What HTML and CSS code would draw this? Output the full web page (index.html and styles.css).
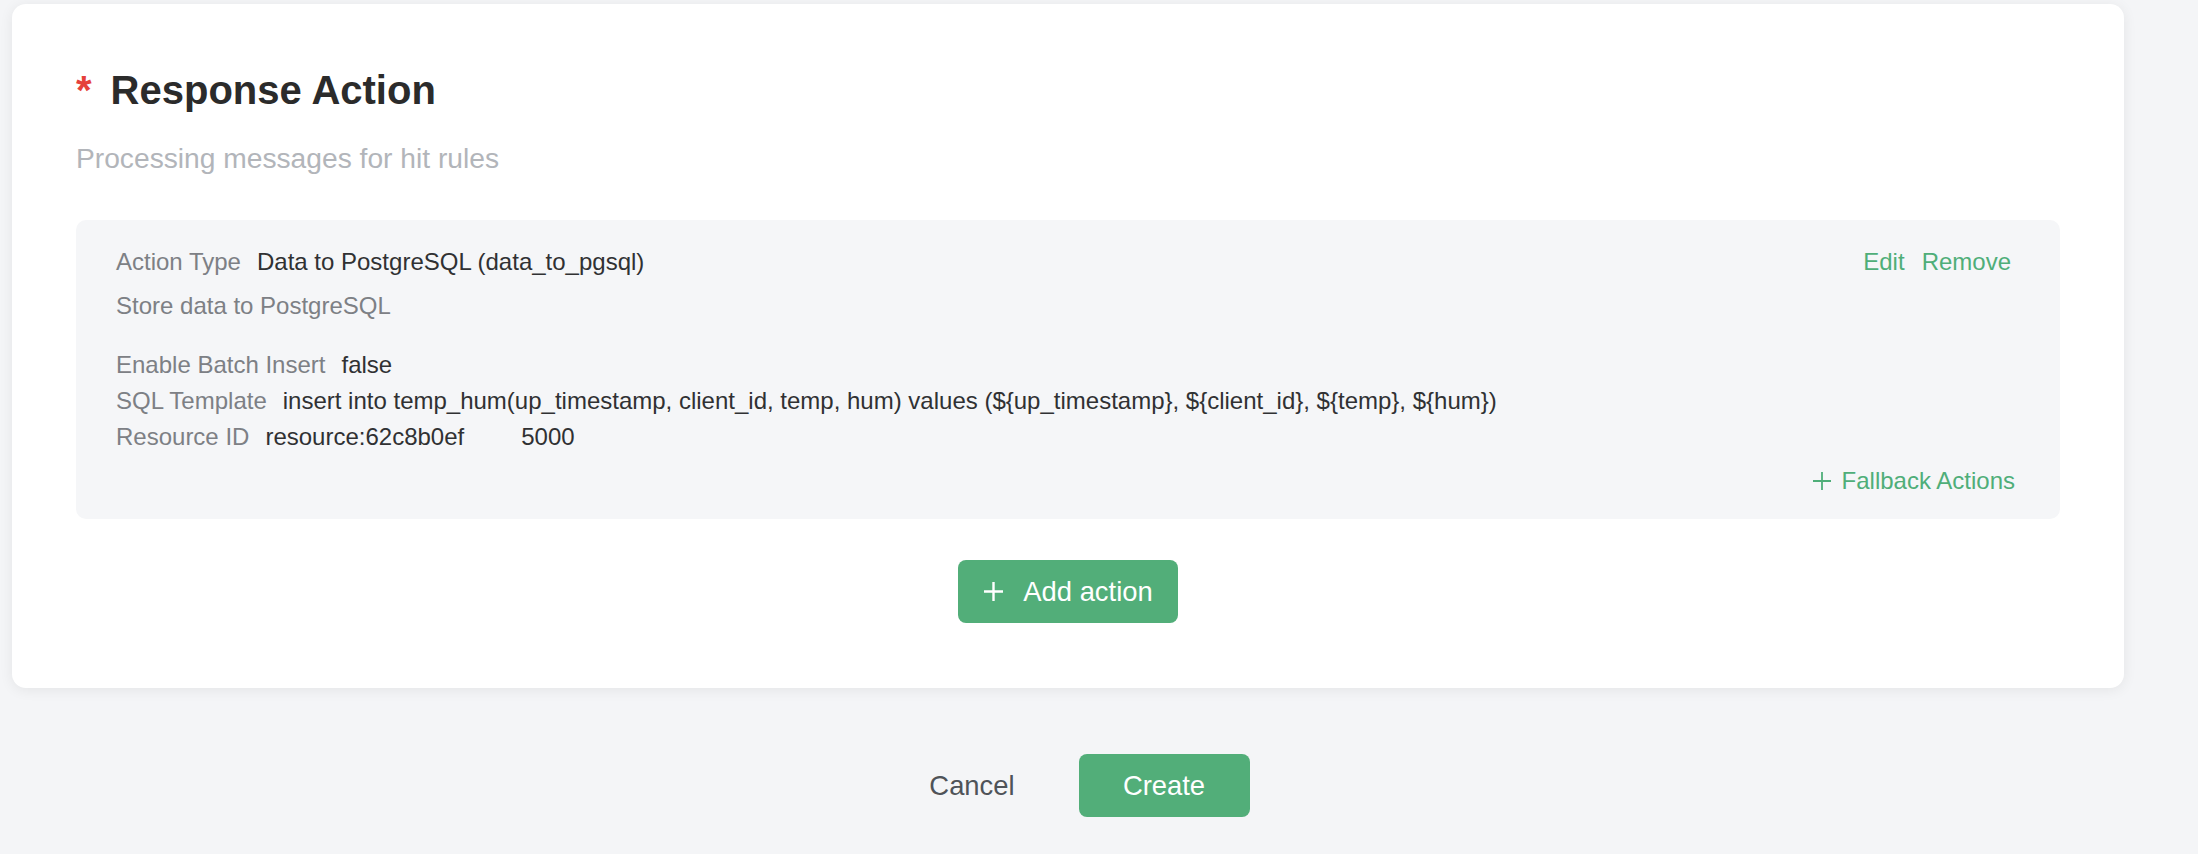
FILE: index.html
```html
<!DOCTYPE html>
<html lang="en">
<head>
<meta charset="utf-8">
<title>Response Action</title>
<link rel="stylesheet" href="styles.css">
</head>
<body>
<div class="page">
  <section class="card">
    <h2 class="title"><span class="req">*</span>Response Action</h2>
    <p class="subtitle">Processing messages for hit rules</p>
    <div class="panel">
      <div class="row head">
        <div><span class="label">Action Type</span><span class="value">Data to PostgreSQL (data_to_pgsql)</span></div>
        <div class="links"><a class="link">Edit</a><a class="link">Remove</a></div>
      </div>
      <div class="row desc"><span class="label">Store data to PostgreSQL</span></div>
      <div class="props">
        <div class="row prop"><span class="label">Enable Batch Insert</span><span class="value">false</span></div>
        <div class="row prop"><span class="label">SQL Template</span><span class="value">insert into temp_hum(up_timestamp, client_id, temp, hum) values (${up_timestamp}, ${client_id}, ${temp}, ${hum})</span></div>
        <div class="row prop"><span class="label">Resource ID</span><span class="value">resource:62c8b0ef</span><span class="value extra">5000</span></div>
      </div>
      <div class="row fallback">
        <a class="link fb">
          <svg class="plus-sm" width="20" height="20" viewBox="0 0 20 20"><path d="M10 1v18M1 10h18" stroke="currentColor" stroke-width="1.8" fill="none"/></svg>
          Fallback Actions
        </a>
      </div>
    </div>
    <div class="add-wrap">
      <button class="btn primary add">
        <svg width="21" height="21" viewBox="0 0 21 21"><path d="M10.5 1v19M1 10.5h19" stroke="#fff" stroke-width="2.4" fill="none"/></svg>
        <span>Add action</span>
      </button>
    </div>
  </section>
  <div class="footer">
    <button class="btn text">Cancel</button>
    <button class="btn primary create">Create</button>
  </div>
</div>
</body>
</html>
```

FILE: styles.css
```css
html, body {
  margin: 0;
  padding: 0;
}
body {
  background: #f4f5f7;
  font-family: "Liberation Sans", Arial, Helvetica, sans-serif;
  min-height: 854px;
}
.page {
  width: 2112px;
  margin-left: 12px;
  padding-top: 4px;
}
.card {
  background: #ffffff;
  border-radius: 14px;
  box-shadow: 0 2px 14px rgba(0, 0, 0, 0.07);
  padding: 62px 64px 65px;
}
.title {
  margin: 0;
  font-size: 40px;
  line-height: 48px;
  font-weight: bold;
  color: #2b2b2b;
}
.req {
  color: #e5403b;
  margin-right: 19px;
}
.subtitle {
  margin: 24px 0 0;
  font-size: 28.2px;
  line-height: 40px;
  color: #b2b5ba;
}
.panel {
  margin-top: 42px;
  background: #f5f6f8;
  border-radius: 10px;
  padding: 26px 49px 22px 40px;
  font-size: 24px;
}
.row {
  display: flex;
  line-height: 32px;
}
.head {
  justify-content: space-between;
}
.label {
  color: #7d8085;
  margin-right: 16px;
}
.value {
  color: #303133;
}
.extra {
  margin-left: 57px;
}
.links {
  display: flex;
  gap: 17px;
}
.link {
  color: #4fae79;
  cursor: pointer;
}
.desc {
  margin-top: 12px;
}
.props {
  margin-top: 25px;
}
.prop {
  line-height: 36px;
}
.fallback {
  margin-top: 10px;
  justify-content: flex-end;
}
.fb {
  display: flex;
  align-items: center;
  gap: 10px;
  margin-right: -4px;
}
.plus-sm {
  display: block;
}
.add-wrap {
  margin-top: 41px;
  display: flex;
  justify-content: center;
}
.btn {
  height: 63px;
  border: none;
  border-radius: 8px;
  font-family: "Liberation Sans", Arial, Helvetica, sans-serif;
  font-size: 27.4px;
  cursor: pointer;
  padding: 0;
}
.primary {
  background: #52ae79;
  color: #ffffff;
}
.add {
  display: inline-flex;
  align-items: center;
  gap: 19px;
  padding: 0 25px;
}
.add svg {
  display: block;
}
.footer {
  margin-top: 66px;
  display: flex;
  justify-content: center;
  gap: 21px;
}
.text {
  width: 171px;
  background: transparent;
  color: #4f5358;
}
.create {
  width: 171px;
}
```
